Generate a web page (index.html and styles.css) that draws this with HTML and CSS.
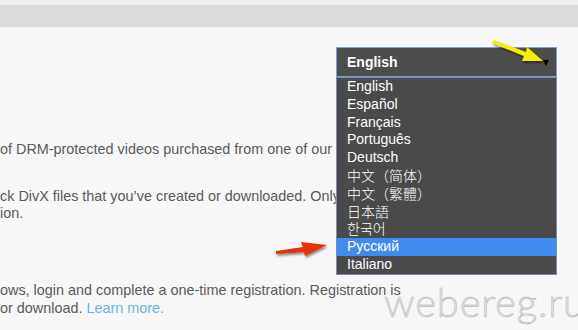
FILE: index.html
```html
<!DOCTYPE html>
<html lang="en">
<head>
  <meta charset="UTF-8">
  <title>DivX Settings</title>
  <link rel="stylesheet" href="styles.css">
</head>
<body>
  <div id="topbar"></div>

  <div id="main">
    <div class="text-col">
      <p class="para first">of DRM-protected videos purchased from one of our</p>
      <p class="para second">ck DivX files that you’ve created or downloaded. Only<br>ion.</p>
      <p class="para third">ows, login and complete a one-time registration. Registration is<br>or download. <a href="#">Learn more.</a></p>
    </div>

    <div class="lang-col">
      <div class="lang-select">
        <span>English</span>
        <span class="caret"></span>
      </div>
      <ul class="lang-list">
        <li>English</li>
        <li>Español</li>
        <li>Français</li>
        <li>Português</li>
        <li>Deutsch</li>
        <li class="cjk">中文（简体）</li>
        <li class="cjk">中文（繁體）</li>
        <li class="cjk">日本語</li>
        <li class="cjk">한국어</li>
        <li class="active">Русский</li>
        <li>Italiano</li>
      </ul>
    </div>
  </div>

  <svg id="arrows" width="578" height="330" viewBox="0 0 578 330">
    <defs>
      <filter id="shade" x="-20%" y="-50%" width="140%" height="200%">
        <feDropShadow dx="1" dy="2" stdDeviation="1.2" flood-color="#000" flood-opacity="0.45"/>
      </filter>
    </defs>
    <!-- yellow arrow pointing at the caret -->
    <path filter="url(#shade)" fill="#f4f000" d="M492 43 L494 40 L526 52 L527 47 L543 61 L522 61 L524 56 Z"/>
    <!-- red arrow pointing at Русский -->
    <path filter="url(#shade)" fill="#e5300e" d="M276 254 L276 251 L303 247 L301 242 L327 245 L305 256 L304 252 Z"/>
  </svg>

  <div id="watermark">webereg.ru</div>
</body>
</html>
```

FILE: styles.css
```css
html, body {
  margin: 0;
  padding: 0;
  height: 100%;
  background: #f7f7f7;
  font-family: 'Liberation Sans', Arial, sans-serif;
  color: #5a5a5a;
  overflow: hidden;
}
#topbar {
  height: 22px;
  border-top: 5px solid #efeeee;
  background: #dcdada;
}
#main {
  display: flex;
  position: relative;
}
.text-col {
  flex: 1;
  min-width: 0;
  padding-top: 114px;
  white-space: nowrap;
}
.para {
  margin: 0;
  font-size: 14.4px;
  line-height: 17px;
}
.second {
  margin-top: 30px;
}
.third {
  margin-top: 59px;
  line-height: 18px;
}
.para a {
  color: #69b3e4;
  text-decoration: none;
}
.lang-col {
  flex-shrink: 0;
  width: 221px;
  margin-right: 21px;
  padding-top: 20px;
  position: relative;
}
.lang-select {
  display: flex;
  align-items: center;
  justify-content: space-between;
  height: 28px;
  padding: 0 7px 0 10px;
  background: #4d4d4d;
  border: 1px solid #7f9fd8;
  color: #fff;
  font-weight: bold;
  font-size: 14px;
}
.caret {
  width: 0;
  height: 0;
  margin-top: 2px;
  border-left: 3px solid transparent;
  border-right: 3px solid transparent;
  border-top: 6px solid #000;
}
.lang-list {
  position: absolute;
  top: 50px;
  left: 0;
  right: 0;
  margin: 0;
  padding: 0;
  list-style: none;
  background: #4a4a4a;
  border: 1px solid #7b8cae;
  z-index: 2;
}
.lang-list li {
  padding-left: 10px;
  height: 17.8px;
  line-height: 17.8px;
  font-size: 14px;
  color: #fff;
}
.lang-list li.cjk {
  font-family: 'Noto Sans CJK SC', 'Noto Sans CJK KR', sans-serif;
  font-weight: 300;
  font-size: 14px;
  line-height: 17.8px;
}
.lang-list li.active {
  background: #3f8cf0;
}
#arrows {
  position: absolute;
  top: 0;
  left: 0;
  z-index: 3;
  pointer-events: none;
}
#watermark {
  position: absolute;
  left: 384px;
  top: 279px;
  font-family: Lato, 'Open Sans', sans-serif;
  font-weight: 300;
  font-size: 40px;
  line-height: 46px;
  letter-spacing: 0.8px;
  color: #e2e2e2;
  -webkit-text-stroke: 0.4px #a8a8a8;
  z-index: 4;
}
```
